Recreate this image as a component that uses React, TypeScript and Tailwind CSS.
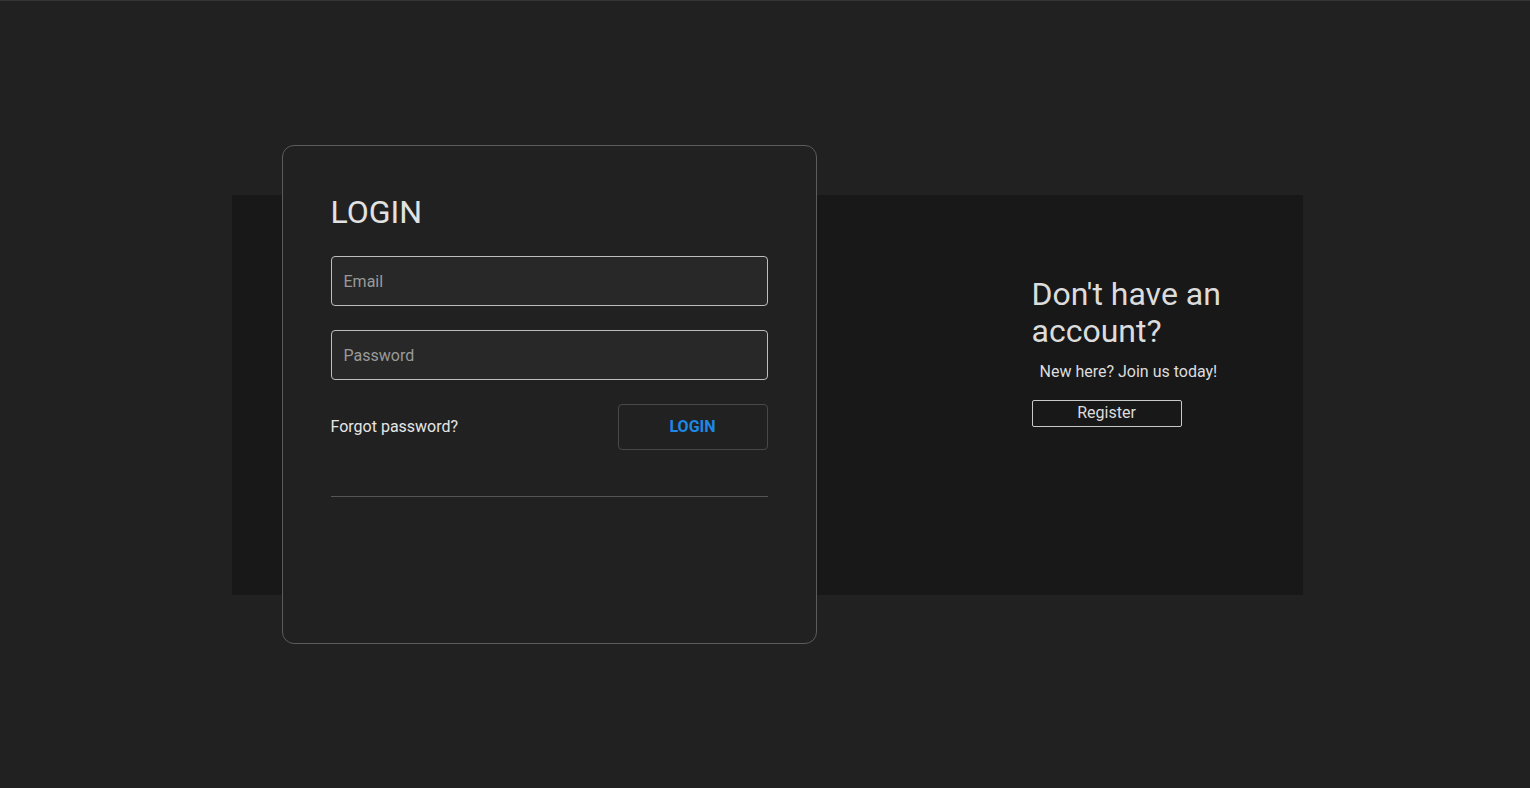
import React from 'react';

const App: React.FC = () => {
  return (
    <div
      className="h-[788px] w-full bg-[#212121] border-t border-[#363636] pl-1 flex items-center justify-center"
      style={{ fontFamily: 'Roboto, "Noto Sans", sans-serif' }}
    >
      <div className="w-[1071px] h-[400px] bg-[#181818] flex items-center">
        {/* Login card */}
        <div className="ml-[50px] w-[535px] h-[499px] shrink-0 rounded-xl border border-[#5c5c5c] bg-[#212121] px-12 pt-12">
          <h1 className="text-[32px] leading-9 text-[#e2e2e2]">LOGIN</h1>
          <input
            type="email"
            placeholder="Email"
            className="mt-[26px] block w-full h-[50px] rounded bg-[#282828] border border-[#bdbdbd] px-3 text-base text-[#e0e0e0] placeholder:text-[#9a9a9a] outline-none"
          />
          <input
            type="password"
            placeholder="Password"
            className="mt-6 block w-full h-[50px] rounded bg-[#282828] border border-[#bdbdbd] px-3 text-base text-[#e0e0e0] placeholder:text-[#9a9a9a] outline-none"
          />
          <div className="mt-6 flex items-center justify-between">
            <a className="text-base text-[#e6e6e6] cursor-pointer">Forgot password?</a>
            <button className="w-[150px] h-[46px] rounded border border-[#484848] bg-[#212121] text-base font-bold text-[#1e88e5]">
              LOGIN
            </button>
          </div>
          <div className="mt-[46px] h-px bg-[#555555]" />
        </div>

        {/* Register side */}
        <div className="self-start mt-[81px] ml-[215px] w-[200px]">
          <h2 className="text-[32px] leading-[37px] text-[#dcdcdc]">Don't have an account?</h2>
          <p className="mt-[10px] pl-2 text-base leading-6 text-[#dddddd]">New here? Join us today!</p>
          <button className="mt-4 w-[150px] h-[27px] border border-[#c8c8c8] rounded-[2px] text-base leading-none text-[#dddddd]">
            Register
          </button>
        </div>
      </div>
    </div>
  );
};

export default App;
